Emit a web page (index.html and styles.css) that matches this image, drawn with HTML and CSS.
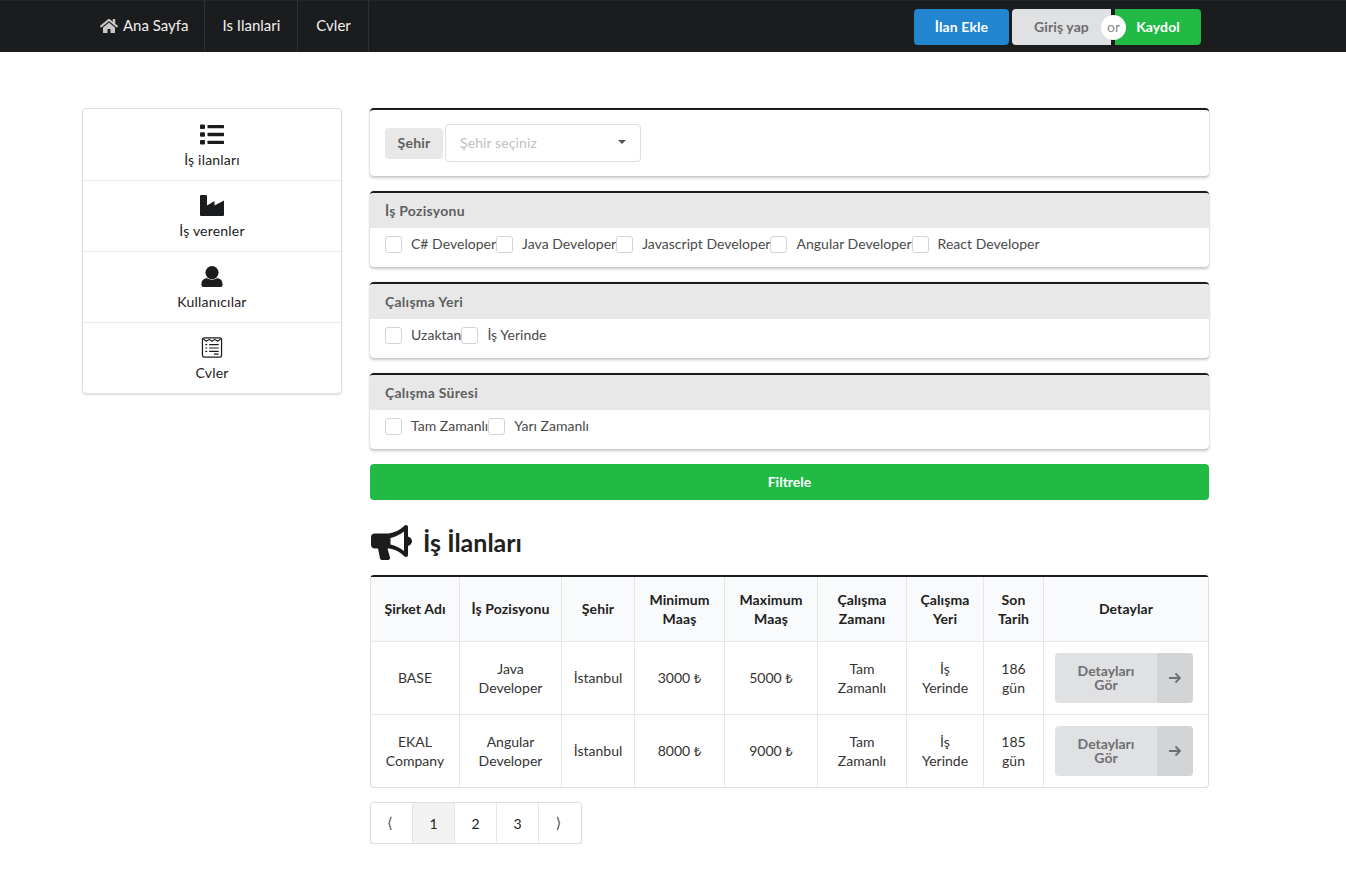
FILE: index.html
```html
<!DOCTYPE html>
<html lang="tr">
<head>
<meta charset="utf-8">
<title>İş İlanları</title>
<link rel="stylesheet" href="styles.css">
</head>
<body>
<nav class="topbar">
  <div class="nav-links">
    <a class="nav-item nav-home"><svg class="home-icon" viewBox="0 0 576 512"><path d="M280.37 148.26L96 300.11V464a16 16 0 0 0 16 16l112.06-.29a16 16 0 0 0 15.92-16V368a16 16 0 0 1 16-16h64a16 16 0 0 1 16 16v95.64a16 16 0 0 0 16 16.05L464 480a16 16 0 0 0 16-16V300L295.67 148.26a12.19 12.19 0 0 0-15.3 0zM571.6 251.47L488 182.56V44.05a12 12 0 0 0-12-12h-56a12 12 0 0 0-12 12v72.61L318.47 43a48 48 0 0 0-61 0L4.34 251.47a12 12 0 0 0-1.6 16.9l25.5 31A12 12 0 0 0 45.15 301l235.22-193.74a12.19 12.19 0 0 1 15.3 0L530.9 301a12 12 0 0 0 16.9-1.6l25.5-31a12 12 0 0 0-1.7-16.93z"/></svg>Ana Sayfa</a>
    <a class="nav-item">Is Ilanlari</a>
    <a class="nav-item">Cvler</a>
  </div>
  <div class="nav-actions">
    <button class="btn btn-blue">İlan Ekle</button>
    <div class="btn-group">
      <button class="btn btn-grey">Giriş yap</button>
      <span class="or">or</span>
      <button class="btn btn-green">Kaydol</button>
    </div>
  </div>
</nav>

<main class="layout">
  <aside class="side-menu">
    <a class="side-item">
      <svg class="side-icon" viewBox="0 0 24 20"><rect x="0" y="0" width="5" height="4.4" rx="1"/><rect x="0" y="7.8" width="5" height="4.4" rx="1"/><rect x="0" y="15.6" width="5" height="4.4" rx="1"/><rect x="7.5" y="0.4" width="16.5" height="3.4" rx=".6"/><rect x="7.5" y="8.3" width="16.5" height="3.4" rx=".6"/><rect x="7.5" y="16.2" width="16.5" height="3.4" rx=".6"/></svg>
      <span>İş ilanları</span>
    </a>
    <a class="side-item">
      <svg class="side-icon" viewBox="0 0 24 21"><path d="M0 1a1 1 0 0 1 1-1h5a1 1 0 0 1 1 1v9.500L14.500 6v4.500L24 5.500V20a1 1 0 0 1-1 1H1a1 1 0 0 1-1-1z"/></svg>
      <span>İş verenler</span>
    </a>
    <a class="side-item">
      <svg class="side-icon" viewBox="0 0 24 24"><circle cx="12" cy="7.500" r="7.500"/><path d="M0 20.500c0-4 2.800-6.500 6-6.500 1.500 0 3 1.700 6 1.700s4.500-1.700 6-1.700c3.200 0 6 2.500 6 6.500V22a2 2 0 0 1-2 2H2a2 2 0 0 1-2-2z"/></svg>
      <span>Kullanıcılar</span>
    </a>
    <a class="side-item">
      <svg class="side-icon" viewBox="0 0 22 22"><rect x="1" y="1" width="20" height="20" rx="2" class="doc-line"/><path class="doc-thin" d="M2 2l3 2.500 3-2 3 2 3-2 3 2 3-2.500"/><path class="doc-thin" d="M4 8h2M8 8h10M4 11.500h2M8 11.500h10M4 15h2M8 15h10M13 18h5"/></svg>
      <span>Cvler</span>
    </a>
  </aside>

  <section class="content">
    <div class="card card-city">
      <span class="city-label">Şehir</span>
      <div class="select"><span>Şehir seçiniz</span><i class="caret"></i></div>
    </div>

    <div class="card">
      <h4 class="card-head">İş Pozisyonu</h4>
      <div class="checks">
        <label class="check"><i class="box"></i>C# Developer</label>
        <label class="check"><i class="box"></i>Java Developer</label>
        <label class="check"><i class="box"></i>Javascript Developer</label>
        <label class="check"><i class="box"></i>Angular Developer</label>
        <label class="check"><i class="box"></i>React Developer</label>
      </div>
    </div>

    <div class="card">
      <h4 class="card-head">Çalışma Yeri</h4>
      <div class="checks">
        <label class="check"><i class="box"></i>Uzaktan</label>
        <label class="check"><i class="box"></i>İş Yerinde</label>
      </div>
    </div>

    <div class="card">
      <h4 class="card-head">Çalışma Süresi</h4>
      <div class="checks">
        <label class="check"><i class="box"></i>Tam Zamanlı</label>
        <label class="check"><i class="box"></i>Yarı Zamanlı</label>
      </div>
    </div>

    <button class="filter-btn">Filtrele</button>

    <h2 class="page-title">
      <svg class="horn" viewBox="0 0 42 36"><path fill-rule="evenodd" d="M36 1c1.300 0 2 .8 2 2v9.500c2.300.7 4 2.600 4 4.800s-1.700 4.100-4 4.800V31c0 1.200-.7 2-2 2-.8 0-1.400-.4-2-1-4-3.800-9-6.800-14.500-7.500l-2 0 2.500 9c.3 1.200-.5 2.500-2 2.500h-6c-1 0-1.700-.6-2-1.500L8 24.500H5c-2.600 0-4-1.600-4-4v-7c0-2.400 1.400-4 4-4h13.500C24.500 8.800 30 6 34 2c.6-.6 1.200-1 2-1zM34 7.500c-4 3.300-8.800 5.500-13.500 6.500v6.500c4.700 1 9.500 3.200 13.500 6.500z"/></svg>
      <span>İş İlanları</span>
    </h2>

    <table class="jobs">
      <colgroup>
        <col class="c1"><col class="c2"><col class="c3"><col class="c4"><col class="c5"><col class="c6"><col class="c7"><col class="c8"><col class="c9">
      </colgroup>
      <thead>
        <tr>
          <th>Şirket Adı</th><th>İş Pozisyonu</th><th>Şehir</th><th>Minimum Maaş</th><th>Maximum Maaş</th><th>Çalışma Zamanı</th><th>Çalışma Yeri</th><th>Son Tarih</th><th>Detaylar</th>
        </tr>
      </thead>
      <tbody>
        <tr>
          <td>BASE</td><td>Java Developer</td><td>İstanbul</td><td>3000 <span class="lira">₺</span></td><td>5000 <span class="lira">₺</span></td><td>Tam Zamanlı</td><td>İş Yerinde</td><td>186 gün</td>
          <td><button class="detail-btn"><span class="detail-text">Detayları Gör</span><span class="detail-arrow"><svg viewBox="0 0 14 14"><path d="M1 7h11M7.500 2.500L12 7l-4.500 4.500"/></svg></span></button></td>
        </tr>
        <tr>
          <td>EKAL Company</td><td>Angular Developer</td><td>İstanbul</td><td>8000 <span class="lira">₺</span></td><td>9000 <span class="lira">₺</span></td><td>Tam Zamanlı</td><td>İş Yerinde</td><td>185 gün</td>
          <td><button class="detail-btn"><span class="detail-text">Detayları Gör</span><span class="detail-arrow"><svg viewBox="0 0 14 14"><path d="M1 7h11M7.500 2.500L12 7l-4.500 4.500"/></svg></span></button></td>
        </tr>
      </tbody>
    </table>

    <div class="pager">
      <a class="page chevron">⟨</a>
      <a class="page active">1</a>
      <a class="page">2</a>
      <a class="page">3</a>
      <a class="page chevron">⟩</a>
    </div>
  </section>
</main>
</body>
</html>
```

FILE: styles.css
```css
* { box-sizing: border-box; }
html, body { margin: 0; padding: 0; }
body {
  font-family: Lato, "Liberation Sans", sans-serif;
  font-size: 14px;
  line-height: 19px;
  color: #212121;
  background: #fff;
}

.topbar {
  height: 52px;
  background: #1b1c1d;
  border-top: 1px solid #222426;
  display: flex;
  justify-content: space-between;
  padding: 0 145px 0 82px;
}
.nav-links { display: flex; }
.nav-item {
  display: flex;
  align-items: center;
  gap: 5px;
  padding: 0 17px 2px 18px;
  font-size: 15px;
  color: #f1f1f1;
  border-right: 1px solid #2f3031;
}
.nav-home { padding-right: 15px; }
.home-icon { width: 18px; height: 16px; fill: #c8c8c8; }
.nav-actions { display: flex; gap: 3px; align-items: flex-start; padding-top: 8px; }
.btn {
  height: 36px;
  border: 0;
  border-radius: 4px;
  font: 700 14px Lato, sans-serif;
  letter-spacing: .1px;
  padding: 0 0 2px;
}
.btn-blue { width: 95px; background: #2185d0; color: #fff; }
.btn-group { display: flex; position: relative; gap: 4px; }
.btn-grey { width: 99px; background: #e0e1e2; color: #6b6c6e; border-radius: 4px 0 0 4px; }
.btn-green { width: 86px; background: #21ba45; color: #fff; border-radius: 0 4px 4px 0; }
.or {
  position: absolute;
  left: 89px;
  top: 6px;
  width: 25px;
  height: 25px;
  border-radius: 50%;
  background: #fff;
  color: #8a8b8d;
  font-size: 14px;
  line-height: 24px;
  text-align: center;
}

.layout {
  display: grid;
  grid-template-columns: 260px 839px;
  gap: 28px;
  padding: 56px 0 0 82px;
  align-items: start;
}

.side-menu {
  border: 1px solid #dededf;
  border-radius: 4px;
  box-shadow: 0 1px 2px rgba(34, 36, 38, .15);
  display: flex;
  flex-direction: column;
}
.side-item {
  height: 71px;
  display: flex;
  flex-direction: column;
  align-items: center;
  padding-top: 14px;
  border-bottom: 1px solid #e9e9ea;
  color: #1f2021;
  letter-spacing: .2px;
}
.side-item:first-child { height: 72px; padding-top: 15px; }
.side-item:last-child { border-bottom: 0; height: 70px; }
.side-item span { margin-top: 5px; }
.side-icon { width: 24px; height: 21px; fill: #1b1c1d; }
.doc-line { fill: none; stroke: #1b1c1d; stroke-width: 1.300; }
.doc-thin { fill: none; stroke: #1b1c1d; stroke-width: 1.200; }

.content { display: flex; flex-direction: column; gap: 15px; }
.card {
  border-top: 2px solid #1b1c1d;
  border-radius: 4px;
  background: #fff;
  box-shadow: 0 2px 3px rgba(34, 36, 38, .25), 0 0 1px rgba(34, 36, 38, .25);
  height: 76px;
  overflow: hidden;
}
.card-city {
  height: 68px;
  display: flex;
  align-items: center;
  padding: 0 15px;
  gap: 2px;
}
.city-label {
  width: 58px;
  height: 31px;
  line-height: 29px;
  text-align: center;
  background: #e8e8e8;
  border-radius: 4px;
  font-weight: 700;
  color: #5e5f60;
  letter-spacing: .2px;
}
.select {
  width: 196px;
  height: 38px;
  border: 1px solid #dedede;
  border-radius: 4px;
  display: flex;
  align-items: center;
  justify-content: space-between;
  padding: 0 14px 2px;
  color: #bfbfbf;
  letter-spacing: .1px;
}
.caret {
  width: 0;
  height: 0;
  border: 4px solid transparent;
  border-top-color: #555;
  border-bottom: 0;
}
.card-head {
  margin: 0;
  height: 35px;
  line-height: 36px;
  padding-left: 15px;
  background: #e8e8e8;
  font-size: 14px;
  font-weight: 700;
  color: #5e5f60;
  letter-spacing: .25px;
}
.checks { display: flex; padding: 7px 15px 0; }
.check { display: flex; align-items: flex-start; height: 19px; color: #4a4a4a; letter-spacing: .02px; line-height: 17px; }
.box {
  width: 17px;
  height: 17px;
  margin: 1px 9px 0 0;
  border: 1px solid #d4d4d5;
  border-radius: 3px;
  background: #fff;
}

.filter-btn {
  height: 36px;
  border: 0;
  border-radius: 4px;
  background: #21ba45;
  color: #fff;
  font: 700 14px Lato, sans-serif;
  padding: 0 0 1px;
}

.page-title {
  display: flex;
  align-items: center;
  gap: 11px;
  margin: 9px 0 0;
  height: 36px;
  font-size: 25px;
  font-weight: 700;
  color: #212121;
}
.horn { width: 42px; height: 36px; fill: #1b1c1d; }

.jobs {
  width: 839px;
  table-layout: fixed;
  border-collapse: separate;
  border-spacing: 0;
  border: 1px solid #dfdfe0;
  border-top: 2px solid #1b1c1d;
  border-radius: 4px;
  text-align: center;
  color: #333;
}
.c1 { width: 88px; } .c2 { width: 102px; } .c3 { width: 73px; }
.c4 { width: 90px; } .c5 { width: 93px; } .c6 { width: 89px; }
.c7 { width: 77px; } .c8 { width: 60px; } .c9 { width: 165px; }
.jobs th, .jobs td { border-left: 1px solid #e6e6e6; }
.jobs th:first-child, .jobs td:first-child { border-left: 0; }
.jobs th {
  height: 64px;
  padding: 0 10px 1px;
  background: #f9fafb;
  font-weight: 700;
  color: #212121;
  letter-spacing: .1px;
}
.jobs td {
  height: 73px;
  padding: 0 11px 1px;
  border-top: 1px solid #e6e6e6;
}
.jobs td:last-child { padding-bottom: 0; }
.lira { font-family: "Noto Sans", sans-serif; font-size: 13px; font-weight: 400; }
.detail-btn {
  width: 138px;
  height: 50px;
  padding: 0;
  border: 0;
  border-radius: 4px;
  background: #e0e1e2;
  color: #6e6f71;
  font: 700 14px/14px Lato, sans-serif;
  display: flex;
  overflow: hidden;
}
.detail-text { width: 102px; padding: 0 20px; align-self: center; }
.detail-arrow {
  width: 36px;
  align-self: stretch;
  background: #d3d4d5;
  display: flex;
  align-items: center;
  justify-content: center;
}
.detail-arrow svg { width: 14px; height: 14px; fill: none; stroke: #6e6f71; stroke-width: 1.800; }

.pager {
  display: flex;
  width: 212px;
  height: 42px;
  margin-top: -1px;
  border: 1px solid #dededf;
  border-radius: 4px;
  box-shadow: 0 1px 2px rgba(34, 36, 38, .15);
  overflow: hidden;
}
.page {
  width: 42px;
  display: flex;
  align-items: center;
  justify-content: center;
  border-right: 1px solid #e6e6e6;
  color: #222;
}
.page:last-child { border-right: 0; }
.page.active { background: #f2f2f2; }
.chevron { padding-right: 3px; font-size: 15px; font-family: "DejaVu Sans", sans-serif; color: #555; }
```
